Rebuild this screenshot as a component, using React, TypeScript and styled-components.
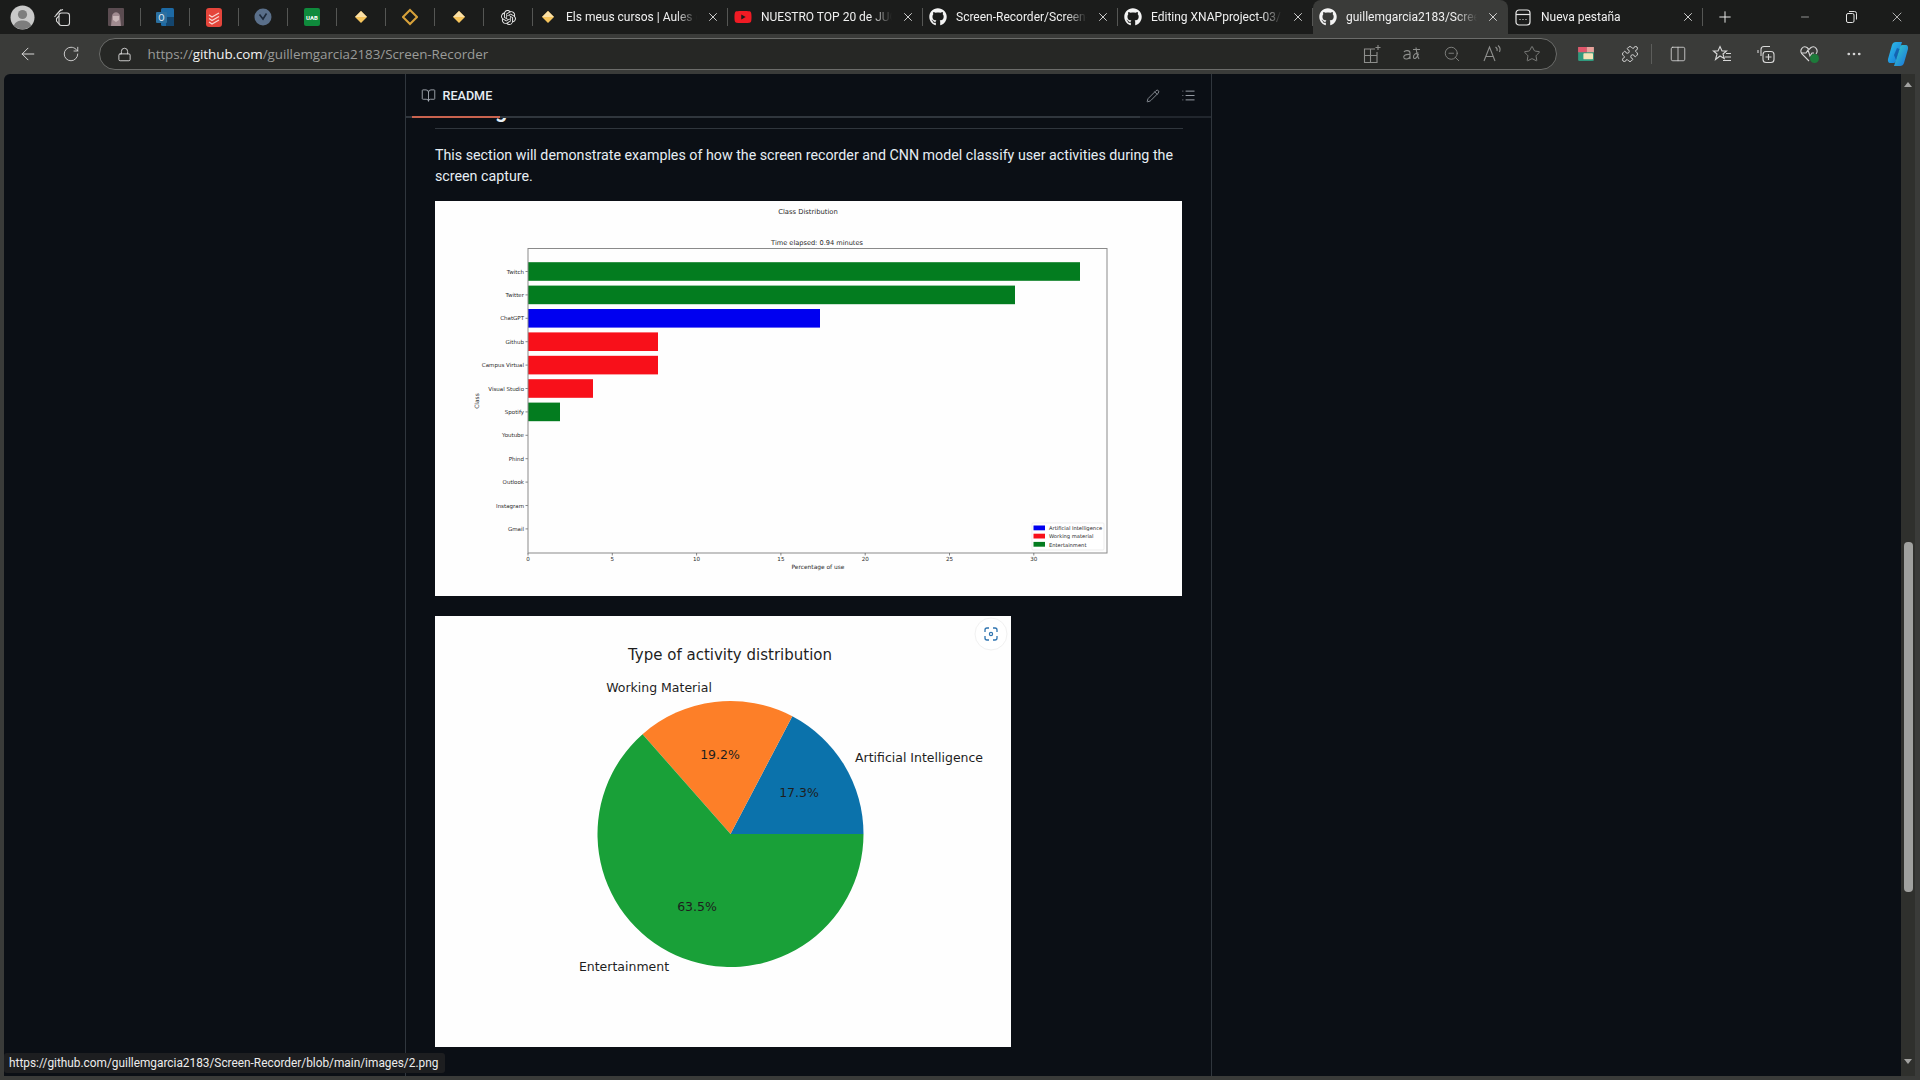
import React from 'react';
import styled, { createGlobalStyle } from 'styled-components';
import {
  ArrowLeft,
  RotateCw,
  Lock,
  Plus,
  X,
  Minus,
  ZoomOut,
  Star,
  Puzzle,
  Columns2,
  MoreHorizontal,
  BookOpen,
  Pencil,
  List,
} from 'lucide-react';
import { FaGithub, FaYoutube } from 'react-icons/fa';
import { SiOpenai } from 'react-icons/si';

const GlobalStyle = createGlobalStyle`
  html, body, #root {
    margin: 0;
    height: 100%;
    overflow: hidden;
    background: #3a3b39;
  }
  * { box-sizing: border-box; }
`;

const uiFont = `Roboto, "Open Sans", "Liberation Sans", sans-serif`;
const urlFont = `"Open Sans", "Noto Sans", "Liberation Sans", sans-serif`;
const chartFont = `"DejaVu Sans", "Liberation Sans", sans-serif`;

const Browser = styled.div`
  width: 1920px;
  height: 1080px;
  display: grid;
  grid-template-columns: minmax(0, 1fr);
  grid-template-rows: 34px 40px 1fr 4px;
  font-family: ${uiFont};
  color: #e8e8e8;
  background: #3a3b39;
`;

/* tab strip */
const TabStrip = styled.div`
  display: flex;
  align-items: center;
  background: #1b1c1b;
`;

const Profile = styled.div`
  width: 44px;
  display: flex;
  justify-content: center;
`;

const Workspaces = styled.div`
  width: 47.5px;
  display: flex;
  justify-content: center;
  padding-right: 11.5px;
`;

const Pinned = styled.div`
  width: 49px;
  height: 34px;
  display: flex;
  align-items: center;
  justify-content: center;
  position: relative;
  &::after {
    content: '';
    position: absolute;
    right: 0;
    top: 8px;
    bottom: 8px;
    width: 1px;
    background: #555654;
  }
`;

const Tab = styled.div<{ $active?: boolean }>`
  width: 195px;
  height: 34px;
  display: flex;
  align-items: center;
  padding: 0 7.5px 0 6px;
  gap: 9.5px;
  position: relative;
  background: ${({ $active }) => ($active ? '#3a3b39' : 'transparent')};
  border-radius: ${({ $active }) => ($active ? '8px 8px 0 0' : '0')};
  ${({ $active }) =>
    !$active &&
    `&::after {
      content: '';
      position: absolute;
      right: 0;
      top: 8px;
      bottom: 8px;
      width: 1px;
      background: #555654;
    }`}
`;

const TabIcon = styled.span`
  width: 18px;
  height: 18px;
  flex: none;
  display: flex;
  align-items: center;
  justify-content: center;
`;

const TabTitle = styled.span`
  flex: 1;
  min-width: 0;
  white-space: nowrap;
  overflow: hidden;
  font-size: 12px;
  color: #f0f0f0;
  mask-image: linear-gradient(to right, #000 84%, transparent 100%);
`;

const TabClose = styled(X)`
  width: 14px;
  height: 14px;
  flex: none;
  color: #e4e4e4;
`;

const NewTab = styled.div`
  width: 44px;
  display: flex;
  justify-content: center;
`;

const WindowControls = styled.div`
  margin-left: auto;
  display: flex;
  align-items: center;
`;

const WindowButton = styled.div`
  width: 46px;
  display: flex;
  justify-content: center;
  color: #e4e4e4;
`;

/* toolbar */
const Toolbar = styled.div`
  display: flex;
  align-items: center;
  background: #3a3b39;
  overflow: hidden;
`;

const NavButton = styled.div`
  width: 45px;
  display: flex;
  justify-content: center;
  color: #d8d8d8;
  &:first-child {
    margin-left: 6px;
  }
`;

const Omnibox = styled.div`
  margin-left: 6px;
  width: 1458px;
  flex: none;
  height: 32px;
  border: 1px solid #6b6c6a;
  border-radius: 16px;
  background: #262725;
  display: flex;
  align-items: center;
  padding: 0 13.5px 0 17px;
  color: #c8c8c8;
`;

const Url = styled.div`
  margin-left: 16px;
  font-family: ${urlFont};
  font-size: 13.4px;
  color: #9a9b99;
  letter-spacing: -0.05px;
  flex: 1;
  b {
    font-weight: 400;
    color: #f2f2f2;
  }
`;

const BoxIcons = styled.div`
  display: flex;
  align-items: center;
  gap: 20px;
  color: #8d8e8c;
`;

const BoxIcon = styled.span`
  width: 20px;
  height: 20px;
  display: flex;
  align-items: center;
  justify-content: center;
`;

const ToolIcons = styled.div`
  display: flex;
  align-items: center;
  flex: none;
  margin-left: 7.5px;
  color: #d8d8d8;
`;

const ToolIcon = styled.span<{ $rule?: boolean }>`
  width: 44px;
  height: 26px;
  flex: none;
  display: flex;
  align-items: center;
  justify-content: center;
  position: relative;
  ${({ $rule }) =>
    $rule &&
    `margin-right: 4px;
    &::after {
      content: '';
      position: absolute;
      right: 0;
      top: 3px;
      bottom: 3px;
      width: 1px;
      background: #5c5d5b;
    }`}
`;

/* page */
const Viewport = styled.div`
  min-height: 0;
  display: flex;
  padding-left: 4px;
  position: relative;
`;

const Page = styled.main`
  flex: 1;
  min-width: 0;
  background: #0b0f15;
  border-radius: 6px 0 0 0;
  overflow: hidden;
  padding-left: 401px;
`;

const ReadmeBox = styled.section`
  width: 807px;
  height: 100%;
  border-left: 1px solid #30363d;
  border-right: 1px solid #30363d;
`;

const ReadmeHeader = styled.header`
  height: 42px;
  display: flex;
  align-items: center;
  padding: 1px 5.5px 0 15px;
  color: #e6edf3;
`;

const ReadmeTitle = styled.span`
  flex: 1;
  margin-left: 6.5px;
  font-size: 12.6px;
  font-weight: 500;
`;

const HeaderAction = styled.span`
  width: 35px;
  display: flex;
  justify-content: center;
  color: #aab0b8;
`;

const HeaderRule = styled.div`
  height: 2px;
  background: linear-gradient(
    to right,
    #30363d 0 6px,
    #c9634f 6px 94px,
    #30363d 94px 734px,
    #21262d 734px 100%
  );
`;

const Article = styled.article`
  padding: 0 28px 0 29px;
`;

const ClippedHeading = styled.h2`
  margin: 0;
  height: 11px;
  overflow: hidden;
  border-bottom: 1px solid #30363d;
  font-size: 21.6px;
  line-height: 12px;
  font-weight: 600;
  color: #e6edf3;
  span {
    display: block;
    margin-top: -14px;
  }
`;

const Paragraph = styled.p`
  margin: 16px 0 13px;
  font-size: 14.25px;
  line-height: 21.4px;
  color: #e6edf3;
`;

const ChartFrame = styled.svg`
  display: block;
  width: 747px;
  height: 395px;
  background: #fefefe;
`;

const PieFrame = styled.svg`
  display: block;
  margin-top: 20px;
  width: 576px;
  height: 431px;
  background: #fefefe;
`;

/* scrollbar + status */
const Scrollbar = styled.div`
  width: 14px;
  flex: none;
  background: #2f302d;
  display: flex;
  flex-direction: column;
  align-items: center;
  margin-right: 5px;
  padding-top: 8px;
`;

const ScrollArrow = styled.div<{ $down?: boolean }>`
  width: 0;
  height: 0;
  border-left: 4.5px solid transparent;
  border-right: 4.5px solid transparent;
  ${({ $down }) =>
    $down ? 'border-top: 5px solid #a3a3a1;' : 'border-bottom: 5px solid #a3a3a1;'}
`;

const ScrollThumb = styled.div`
  width: 9px;
  height: 350px;
  margin-top: 455px;
  margin-bottom: 167px;
  border-radius: 4px;
  background: #a0a19f;
`;

const StatusBubble = styled.div`
  position: absolute;
  left: 4px;
  bottom: 3px;
  height: 20px;
  display: flex;
  align-items: center;
  padding: 0 7px 0 5px;
  border-radius: 3px;
  background: #1d1e20;
  font-size: 11.85px;
  color: #ececec;
`;

const Tile = styled.span<{ $bg: string }>`
  width: 16px;
  height: 18px;
  border-radius: 2px;
  background: ${({ $bg }) => $bg};
  display: flex;
  align-items: center;
  justify-content: center;
  color: #fff;
  font-size: 6px;
  font-weight: 700;
`;

const Diamond = ({ outline }: { outline?: boolean }) => (
  <svg width="16" height="18" viewBox="0 0 16 18">
    {outline ? (
      <path d="M8 2 15 9 8 16 1 9Z" fill="none" stroke="#d8a23a" strokeWidth="2" />
    ) : (
      <>
        <path d="M8 3 14 9 8 15 2 9Z" fill="#f6c45c" />
        <path d="M8 3 14 9H2Z" fill="#fbe0a6" />
      </>
    )}
  </svg>
);

const Avatar = () => (
  <svg width="27" height="27" viewBox="0 0 27 27">
    <circle cx="13.5" cy="13.5" r="12" fill="#c9c9c9" />
    <circle cx="13.5" cy="10.5" r="4.6" fill="#7d7d7d" />
    <path d="M4.8 21.5C6.5 17.5 10 16.5 13.5 16.5S20.5 17.5 22.2 21.5A12 12 0 0 1 4.8 21.5Z" fill="#7d7d7d" />
  </svg>
);

const WorkspacesIcon = () => (
  <svg width="18" height="20" viewBox="0 0 18 20" fill="none" stroke="#d8d8d8" strokeWidth="1.1">
    <path d="M3 8 8 2.5" />
    <path d="M1.5 10 7.5 3.5 10 2.5" />
    <rect x="6" y="6" width="10.5" height="12.5" rx="2.5" />
    <path d="M6 9 3.5 11.5V14L6 17" />
  </svg>
);

const AnimeThumb = () => (
  <svg width="16" height="18" viewBox="0 0 16 18">
    <rect width="16" height="18" rx="1" fill="#5b4c51" />
    <path d="M3 18 4 8C5 3 11 3 12 8L13 18Z" fill="#a08b90" />
    <path d="M5 8H11V12L8 14 5 12Z" fill="#c9b7b8" />
  </svg>
);

const OutlookIcon = () => (
  <svg width="18" height="20" viewBox="0 0 18 20">
    <rect x="5" y="1" width="13" height="18" rx="1.5" fill="#1d6aa5" />
    <rect x="10" y="10" width="8" height="9" fill="#14466f" />
    <rect y="5" width="11" height="11" rx="1" fill="#2b6f9f" />
    <text x="5.5" y="13.5" textAnchor="middle" fontSize="8" fill="#e6f0f8" fontFamily={chartFont}>
      O
    </text>
  </svg>
);

const TodoistIcon = () => (
  <svg width="16" height="19" viewBox="0 0 16 19">
    <rect width="16" height="19" rx="3" fill="#e5453b" />
    <path d="M3 7 6 9 13 5M3 10.5 6 12.5 13 8.5M3 14 6 16 13 12" fill="none" stroke="#f9d6d2" strokeWidth="1.3" />
  </svg>
);

const ClockIcon = () => (
  <svg width="18" height="18" viewBox="0 0 18 18">
    <circle cx="9" cy="9" r="8.5" fill="#5a6f8a" />
    <path d="M5.5 6.5 9 11 12.5 5.5" fill="none" stroke="#1d2a3b" strokeWidth="1.6" />
  </svg>
);

const AddTabIcon = () => (
  <svg width="18" height="20" viewBox="0 0 18 20" fill="none" stroke="currentColor" strokeWidth="1.1">
    <path d="M12 5H1.5V18.5H14V8" />
    <path d="M1.5 11.5H14M7.5 5V18.5" />
    <path d="M15 1V6M12.5 3.5H17.5" />
  </svg>
);

const ReadAloudIcon = () => (
  <svg width="20" height="20" viewBox="0 0 20 20" fill="none" stroke="currentColor" strokeWidth="1.1">
    <path d="M2 17 7.5 3 13 17M4 12.5H11" />
    <path d="M13.5 3C15 4 15.5 5.5 15 7M16 1.5C18 3 18.5 5.5 17.5 8" />
  </svg>
);

const TranslateIcon = () => (
  <svg width="20" height="20" viewBox="0 0 20 20" fill="none" stroke="currentColor" strokeWidth="1.1">
    <path d="M2 8C3 6 8 6 8 9V15M8 10.5C3 10 1 12 2 14C3 15.5 7 15.5 8 12.5" />
    <path d="M11 5.5H18M14 3.5C14.5 8 15 12 17 15M16.5 9C14 9 11 10.5 11.5 13.5C12 15.5 15 14.5 16.5 10" />
  </svg>
);

const NewsIcon = () => (
  <svg width="16" height="14" viewBox="0 0 18 16">
    <rect width="18" height="16" rx="1.5" fill="#2f9a7e" />
    <rect width="10" height="6" fill="#e0566b" />
    <rect x="10" width="8" height="6" fill="#e8a09a" />
    <rect x="6" y="7" width="11" height="7" rx="1" fill="#f4e3b8" />
  </svg>
);

const FavoritesIcon = () => (
  <svg width="20" height="20" viewBox="0 0 20 20" fill="none" stroke="currentColor" strokeWidth="1.1">
    <path d="M8 2.5 10 7H14.5L11 10 12.3 14.5 8 12 3.5 15.5 5 10 1.5 7H6Z" />
    <path d="M14 9.5H19M13 13H19M11 16.5H19" />
  </svg>
);

const CollectionsIcon = () => (
  <svg width="20" height="20" viewBox="0 0 20 20" fill="none" stroke="currentColor" strokeWidth="1.1">
    <path d="M5 12V5.5A3 3 0 0 1 8 2.5H14" />
    <path d="M2 9V6" />
    <rect x="7" y="7.5" width="11" height="11" rx="3" />
    <path d="M12.5 10V16M9.5 13H15.5" />
  </svg>
);

const HealthIcon = () => (
  <svg width="22" height="22" viewBox="0 0 22 22">
    <path
      d="M10 18 3 11C0 7 4 2 8 4.5L10 6.5 12 4.5C16 2 20 7 17 11"
      fill="none"
      stroke="currentColor"
      strokeWidth="1.1"
    />
    <path d="M2 10H7L9 7 11 13 13 10H15" fill="none" stroke="currentColor" strokeWidth="1.1" />
    <circle cx="15.5" cy="15.5" r="4.5" fill="#1d7a3a" />
  </svg>
);

const CopilotIcon = () => (
  <svg width="28" height="28" viewBox="0 0 28 28">
    <defs>
      <linearGradient id="copilotA" x1="0" y1="0" x2="1" y2="1">
        <stop offset="0" stopColor="#2fc1e8" />
        <stop offset="1" stopColor="#1473d8" />
      </linearGradient>
      <linearGradient id="copilotB" x1="0" y1="0" x2="1" y2="1">
        <stop offset="0" stopColor="#36d0c4" />
        <stop offset="1" stopColor="#1a6fe0" />
      </linearGradient>
    </defs>
    <path d="M4 19 8 5C8.6 3 10 2 12 2H18L12 21C11.4 23 10 23 9 23H6C4.4 23 3.6 21 4 19Z" fill="url(#copilotA)" />
    <path d="M24 9 20 23C19.4 25 18 26 16 26H10L16 7C16.6 5 18 5 19 5H22C23.6 5 24.4 7 24 9Z" fill="url(#copilotB)" />
    <path d="M15.5 9 12 20 10 15 13 8Z" fill="#0b3c8c" opacity="0.55" />
  </svg>
);

const tickX = [0, 5, 10, 15, 20, 25, 30];
const classes = [
  { name: 'Twitch', end: 1080, fill: '#037c1f' },
  { name: 'Twitter', end: 1015, fill: '#037c1f' },
  { name: 'ChatGPT', end: 820, fill: '#0000f0' },
  { name: 'Github', end: 658, fill: '#f8101a' },
  { name: 'Campus Virtual', end: 658, fill: '#f8101a' },
  { name: 'Visual Studio', end: 593, fill: '#f8101a' },
  { name: 'Spotify', end: 560, fill: '#037c1f' },
  { name: 'Youtube', end: 528, fill: 'none' },
  { name: 'Phind', end: 528, fill: 'none' },
  { name: 'Outlook', end: 528, fill: 'none' },
  { name: 'Instagram', end: 528, fill: 'none' },
  { name: 'Gmail', end: 528, fill: 'none' },
];

const legend = [
  { label: 'Artificial Intelligence', fill: '#0000f0' },
  { label: 'Working material', fill: '#f8101a' },
  { label: 'Entertainment', fill: '#037c1f' },
];

const ClassChart = () => (
  <ChartFrame viewBox="435 201 747 395" fontFamily={chartFont} fill="#2a2a2a">
    <text x="808" y="213.5" fontSize="6.8" textAnchor="middle">Class Distribution</text>
    <text x="817" y="244.5" fontSize="6.6" textAnchor="middle">Time elapsed: 0.94 minutes</text>
    {classes.map((c, i) => {
      const cy = 271.5 + i * 23.4;
      return (
        <g key={c.name}>
          <rect x="528" y={cy - 9.3} width={c.end - 528} height="18.6" fill={c.fill} />
          <path d={`M525.5 ${cy}H528`} stroke="#555" strokeWidth="0.7" />
          <text x="524" y={cy + 2} fontSize="5.5" textAnchor="end">{c.name}</text>
        </g>
      );
    })}
    <rect x="528" y="248.5" width="579" height="304.5" fill="none" stroke="#8a8a8a" strokeWidth="1" />
    {tickX.map((t, i) => (
      <g key={t}>
        <path d={`M${528 + i * 84.3} 553V555.5`} stroke="#555" strokeWidth="0.7" />
        <text x={528 + i * 84.3} y="560.5" fontSize="5.6" textAnchor="middle">{t}</text>
      </g>
    ))}
    <text x="818" y="568.5" fontSize="5.9" textAnchor="middle">Percentage of use</text>
    <text transform="translate(479 401) rotate(-90)" fontSize="5.9" textAnchor="middle">Class</text>
    <rect x="1032" y="523" width="72" height="27" rx="1" fill="#fff" stroke="#e6e6e6" strokeWidth="0.7" />
    {legend.map((l, i) => (
      <g key={l.label}>
        <rect x="1033.5" y={525.5 + i * 8.2} width="11.5" height="4.8" fill={l.fill} />
        <text x="1049" y={530.2 + i * 8.2} fontSize="5.2">{l.label}</text>
      </g>
    ))}
  </ChartFrame>
);

const pieX = (deg: number) => 730.5 + 133 * Math.cos((deg * Math.PI) / 180);
const pieY = (deg: number) => 834 - 133 * Math.sin((deg * Math.PI) / 180);
const slice = (from: number, to: number) =>
  `M730.5 834L${pieX(from)} ${pieY(from)}A133 133 0 ${to - from > 180 ? 1 : 0} 0 ${pieX(to)} ${pieY(to)}Z`;

const ActivityPie = () => (
  <PieFrame viewBox="435 616 576 431" fontFamily={chartFont} fill="#1e1e1e">
    <text x="730" y="659.5" fontSize="15" textAnchor="middle">Type of activity distribution</text>
    <path d={slice(0, 62.3)} fill="#0b72ab" />
    <path d={slice(62.3, 131.4)} fill="#fd7f28" />
    <path d={slice(131.4, 360)} fill="#19a038" />
    <text x="659" y="692" fontSize="12.5" textAnchor="middle">Working Material</text>
    <text x="919" y="762" fontSize="12.5" textAnchor="middle">Artificial Intelligence</text>
    <text x="624" y="971" fontSize="12.5" textAnchor="middle">Entertainment</text>
    <text x="720" y="758.5" fontSize="12.5" textAnchor="middle">19.2%</text>
    <text x="799" y="796.5" fontSize="12.5" textAnchor="middle">17.3%</text>
    <text x="697" y="910.5" fontSize="12.5" textAnchor="middle">63.5%</text>
    <circle cx="991" cy="634" r="16" fill="#fff" stroke="#f1f1f1" />
    <path
      d="M985 632V630A2 2 0 0 1 987 628H989M993 628H995A2 2 0 0 1 997 630V632M997 636V638A2 2 0 0 1 995 640H993M989 640H987A2 2 0 0 1 985 638V636"
      fill="none"
      stroke="#2f74b0"
      strokeWidth="1.3"
    />
    <circle cx="991" cy="634" r="1.6" fill="none" stroke="#2f74b0" strokeWidth="1.2" />
  </PieFrame>
);

const pinnedTabs = [
  <AnimeThumb key="thumb" />,
  <OutlookIcon key="outlook" />,
  <TodoistIcon key="todoist" />,
  <ClockIcon key="clock" />,
  <Tile key="uab" $bg="#0f8a3c">UAB</Tile>,
  <Diamond key="d1" />,
  <Diamond key="d2" outline />,
  <Diamond key="d3" />,
  <SiOpenai key="openai" size={15} color="#e8e8e8" />,
];

const tabs = [
  { title: 'Els meus cursos | Aules de la UAB', icon: <Diamond /> },
  { title: 'NUESTRO TOP 20 de JUGADORES', icon: <FaYoutube size={18} color="#f01b24" /> },
  { title: 'Screen-Recorder/Screen-Recorder', icon: <FaGithub size={18} color="#f4f4f4" /> },
  { title: 'Editing XNAPproject-03/README', icon: <FaGithub size={18} color="#f4f4f4" /> },
  { title: 'guillemgarcia2183/Screen-Recorder', icon: <FaGithub size={18} color="#f4f4f4" />, active: true },
];

const NewTabPageIcon = () => (
  <svg width="16" height="17" viewBox="0 0 16 17" fill="none" stroke="#e8e8e8" strokeWidth="1.2">
    <rect x="1" y="1" width="14" height="15" rx="3" />
    <path d="M1 5.5H15" />
    <path d="M4.5 10.5H5.5M7.5 10.5H8.5M10.5 10.5H11.5" />
  </svg>
);

const RestoreIcon = () => (
  <svg width="11" height="12" viewBox="0 0 11 12" fill="none" stroke="currentColor">
    <rect x="0.5" y="2.5" width="7.5" height="9" rx="1.5" />
    <path d="M3 0.5H8.5A2 2 0 0 1 10.5 2.5V8.5" />
  </svg>
);

export default function App() {
  return (
    <>
      <GlobalStyle />
      <Browser>
        <TabStrip>
          <Profile>
            <Avatar />
          </Profile>
          <Workspaces>
            <WorkspacesIcon />
          </Workspaces>
          {pinnedTabs.map((icon) => (
            <Pinned key={icon.key}>{icon}</Pinned>
          ))}
          {tabs.map((tab) => (
            <Tab key={tab.title} $active={tab.active}>
              <TabIcon>{tab.icon}</TabIcon>
              <TabTitle>{tab.title}</TabTitle>
              <TabClose strokeWidth={1.5} />
            </Tab>
          ))}
          <Tab>
            <TabIcon>
              <NewTabPageIcon />
            </TabIcon>
            <TabTitle>Nueva pestaña</TabTitle>
            <TabClose strokeWidth={1.5} />
          </Tab>
          <NewTab>
            <Plus size={18} strokeWidth={1.3} color="#eeeeee" />
          </NewTab>
          <WindowControls>
            <WindowButton>
              <Minus size={12} strokeWidth={1.2} />
            </WindowButton>
            <WindowButton>
              <RestoreIcon />
            </WindowButton>
            <WindowButton>
              <X size={16} strokeWidth={1.1} />
            </WindowButton>
          </WindowControls>
        </TabStrip>

        <Toolbar>
          <NavButton>
            <ArrowLeft size={20} strokeWidth={1.2} />
          </NavButton>
          <NavButton>
            <RotateCw size={18} strokeWidth={1.2} />
          </NavButton>
          <Omnibox>
            <Lock size={15} strokeWidth={1.4} color="#e0e0e0" />
            <Url>
              https://<b>github.com</b>/guillemgarcia2183/Screen-Recorder
            </Url>
            <BoxIcons>
              <BoxIcon><AddTabIcon /></BoxIcon>
              <BoxIcon><TranslateIcon /></BoxIcon>
              <BoxIcon><ZoomOut size={18} strokeWidth={1.1} /></BoxIcon>
              <BoxIcon><ReadAloudIcon /></BoxIcon>
              <BoxIcon><Star size={18} strokeWidth={1.1} /></BoxIcon>
            </BoxIcons>
          </Omnibox>
          <ToolIcons>
            <ToolIcon><NewsIcon /></ToolIcon>
            <ToolIcon $rule><Puzzle size={18} strokeWidth={1.3} /></ToolIcon>
            <ToolIcon><Columns2 size={18} strokeWidth={1.1} /></ToolIcon>
            <ToolIcon><FavoritesIcon /></ToolIcon>
            <ToolIcon><CollectionsIcon /></ToolIcon>
            <ToolIcon><HealthIcon /></ToolIcon>
            <ToolIcon><MoreHorizontal size={18} strokeWidth={1.6} /></ToolIcon>
            <ToolIcon><CopilotIcon /></ToolIcon>
          </ToolIcons>
        </Toolbar>

        <Viewport>
          <Page>
            <ReadmeBox>
              <ReadmeHeader>
                <BookOpen size={15} strokeWidth={1.4} color="#aab0b8" />
                <ReadmeTitle>README</ReadmeTitle>
                <HeaderAction><Pencil size={14} strokeWidth={1.3} /></HeaderAction>
                <HeaderAction><List size={15} strokeWidth={1.4} /></HeaderAction>
              </ReadmeHeader>
              <HeaderRule />
              <Article>
                <ClippedHeading>
                  <span>Testing</span>
                </ClippedHeading>
                <Paragraph>
                  This section will demonstrate examples of how the screen recorder and CNN model classify
                  user activities during the screen capture.
                </Paragraph>
                <ClassChart />
                <ActivityPie />
              </Article>
            </ReadmeBox>
          </Page>
          <Scrollbar>
            <ScrollArrow />
            <ScrollThumb />
            <ScrollArrow $down />
          </Scrollbar>
          <StatusBubble>https://github.com/guillemgarcia2183/Screen-Recorder/blob/main/images/2.png</StatusBubble>
        </Viewport>
        <div />
      </Browser>
    </>
  );
}
